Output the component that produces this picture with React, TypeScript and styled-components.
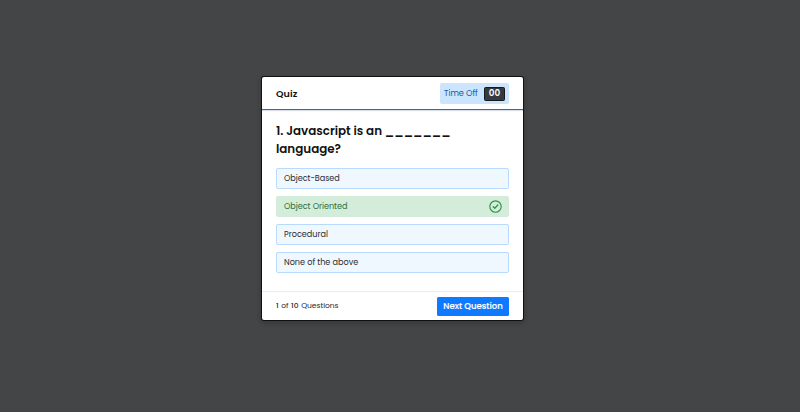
import React from "react";
import styled, { createGlobalStyle } from "styled-components";

const GlobalStyle = createGlobalStyle`
  * { box-sizing: border-box; }
  body {
    margin: 0;
    background: #444547;
    font-family: Poppins, Inter, sans-serif;
  }
`;

const Page = styled.main`
  display: flex;
  flex-direction: column;
  align-items: flex-start;
  height: 412px;
  padding: 77px 0 0 262px;
`;

const Card = styled.section`
  display: flex;
  flex-direction: column;
  width: 261px;
  height: 243px;
  background: #fff;
  border-radius: 2px;
  box-shadow: 0 0 0 1px #101113, 0 2px 5px 1px rgba(0, 0, 0, 0.22);
`;

const Header = styled.header`
  display: flex;
  flex: none;
  align-items: center;
  justify-content: space-between;
  height: 33px;
  padding: 0 14px;
  border-bottom: 1px solid #2467e4;
  box-shadow: 0 1px 1px rgba(60, 90, 150, 0.2);
`;

const Text = styled.span<{ $spacing: number }>`
  white-space: pre;
  letter-spacing: ${(p) => p.$spacing}px;
`;

const Title = styled.h1`
  margin: 1px 0 0;
  font-size: 9.5px;
  line-height: 14px;
  font-weight: 600;
  color: #111;
`;

const Timer = styled.div`
  display: flex;
  align-items: center;
  justify-content: space-between;
  width: 69px;
  height: 21px;
  margin-top: 1px;
  padding: 0 4px;
  border-radius: 2px;
  background: #cce5ff;
  color: #24589a;
  font-size: 8.2px;
`;

const Seconds = styled.div`
  display: flex;
  align-items: center;
  justify-content: center;
  width: 21px;
  height: 14px;
  border: 1px solid #17191d;
  border-radius: 1.5px;
  background: #343a40;
  color: #fff;
  font-size: 8.8px;
  font-weight: 600;
`;

const Body = styled.div`
  flex: 1;
  padding: 12px 14px 0;
`;

const Question = styled.h2`
  margin: 0 0 9.5px;
  font-size: 11.9px;
  line-height: 18px;
  font-weight: 600;
  color: #111;
`;

const Options = styled.div`
  display: flex;
  flex-direction: column;
  gap: 7px;
`;

const Option = styled.div<{ $correct?: boolean }>`
  display: flex;
  align-items: center;
  justify-content: space-between;
  height: 21px;
  padding: 0 6px 0 7px;
  border: 1px solid ${(p) => (p.$correct ? "#d3ecda" : "#b8daff")};
  border-radius: 2px;
  background: ${(p) => (p.$correct ? "#d4edda" : "#f0f8ff")};
  color: ${(p) => (p.$correct ? "#28703a" : "#282c30")};
  font-size: 8.1px;
`;

const Footer = styled.footer`
  display: flex;
  flex: none;
  align-items: center;
  justify-content: space-between;
  height: 29px;
  padding: 0 14px;
  border-top: 1px solid #ececec;
`;

const Count = styled.div`
  display: flex;
  gap: 2.6px;
  color: #25282b;
  font-size: 7.5px;
`;

const Strong = styled.span`
  font-weight: 500;
`;

const NextButton = styled.button`
  width: 72px;
  height: 19px;
  padding: 0;
  border: 0;
  border-radius: 1.5px;
  background: #0f7aff;
  color: #fff;
  font: 500 8.5px Poppins, Inter, sans-serif;
  -webkit-text-stroke: 0.15px #fff;
`;

const CheckIcon = () => (
  <svg width="13" height="13" viewBox="0 0 13 13" fill="none" stroke="#319448" strokeLinecap="round" strokeLinejoin="round">
    <circle cx="6.5" cy="6.5" r="5.7" strokeWidth="1.15" />
    <path d="M4.2 6.7 5.8 8.2 8.8 5" strokeWidth="1.35" />
  </svg>
);

const options = [
  { label: "Object-Based", spacing: -0.05 },
  { label: "Object Oriented", spacing: -0.03 },
  { label: "Procedural", spacing: 0 },
  { label: "None of the above", spacing: 0 },
];

const answer = "Object Oriented";

export default function App() {
  return (
    <>
      <GlobalStyle />
      <Page>
        <Card>
          <Header>
            <Title><Text $spacing={0.1}>Quiz</Text></Title>
            <Timer>
              <Text $spacing={-0.03}>Time Off</Text>
              <Seconds>00</Seconds>
            </Timer>
          </Header>
          <Body>
            <Question>
              <Text $spacing={0}>1. Javascript is an _______</Text>
              <br />
              <Text $spacing={0}>language?</Text>
            </Question>
            <Options>
              {options.map((o) => (
                <Option key={o.label} $correct={o.label === answer}>
                  <Text $spacing={o.spacing}>{o.label}</Text>
                  {o.label === answer && <CheckIcon />}
                </Option>
              ))}
            </Options>
          </Body>
          <Footer>
            <Count>
              <Strong>1</Strong>
              <span>of</span>
              <Strong>10</Strong>
              <span>Questions</span>
            </Count>
            <NextButton><Text $spacing={0}>Next Question</Text></NextButton>
          </Footer>
        </Card>
      </Page>
    </>
  );
}
